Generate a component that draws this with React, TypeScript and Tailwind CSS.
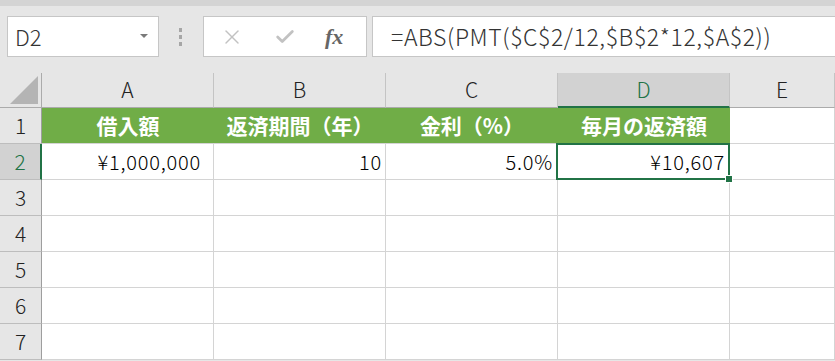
import { X, Check } from "lucide-react";

const FONT = '"Noto Sans CJK JP", "Noto Sans", sans-serif';
const COLS = ["A", "B", "C", "D", "E"];
const ROWS = [1, 2, 3, 4, 5, 6, 7];

const HEAD = ["借入額", "返済期間（年）", "金利（%）", "毎月の返済額"];
const VALUES = ["¥1,000,000", "10", "5.0%", "¥10,607"];
const PADS = ["pr-[12px]", "pr-[3px]", "pr-[4px]", "pr-[4px]"];

function Toolbar() {
  return (
    <div className="flex items-center h-[51px] pt-[10px] pl-[7px]">
      {/* Name box */}
      <div className="relative flex items-center h-[41px] w-[152px] bg-white border border-[#c6c6c6] pl-[7px]">
        <span className="text-[22px] text-[#333] font-light">D2</span>
        <span className="absolute right-[10px] top-[17px] w-0 h-0 border-l-[4px] border-r-[4px] border-t-[4px] border-l-transparent border-r-transparent border-t-[#7a7a7a]" />
      </div>

      {/* Divider dots */}
      <div className="flex flex-col gap-[3px] ml-[20px] mr-[21px]">
        <span className="block w-[3px] h-[4px] bg-[#a6a6a6]" />
        <span className="block w-[3px] h-[4px] bg-[#a6a6a6]" />
        <span className="block w-[3px] h-[4px] bg-[#a6a6a6]" />
      </div>

      {/* Cancel / Enter / fx */}
      <div className="flex items-center h-[41px] w-[164px] bg-white border border-[#c6c6c6]">
        <X className="ml-[16px] h-[24px] w-[24px] text-[#c2c2c2]" strokeWidth={1.4} />
        <Check className="ml-[30px] h-[22px] w-[22px] text-[#c2c2c2]" strokeWidth={3} />
        <span
          className="ml-[29px] text-[22px] italic font-bold text-[#666] leading-none"
          style={{ fontFamily: '"Liberation Serif", "DejaVu Serif", serif' }}
        >
          fx
        </span>
      </div>

      {/* Formula input */}
      <div className="flex items-center h-[41px] flex-1 ml-[5px] bg-white border border-[#c6c6c6] border-r-0 pl-[18px]">
        <span className="text-[23px] font-light tracking-[0.6px] text-[#333] whitespace-nowrap">=ABS(PMT($C$2/12,$B$2*12,$A$2))</span>
      </div>
    </div>
  );
}

function Grid() {
  return (
    <div className="grid grid-cols-[42px_172px_172px_172px_172px_1fr] grid-rows-[35px_repeat(7,36px)]">
      {/* corner */}
      <div className="relative bg-[#e6e6e6] border-r border-b border-[#ababab]">
        <svg className="absolute right-[3px] bottom-[3px]" width="28" height="28" viewBox="0 0 28 28">
          <polygon points="28,0 28,28 0,28" fill="#b4b4b4" />
        </svg>
      </div>
      {COLS.map((c) => {
        const sel = c === "D";
        return (
          <div
            key={c}
            className={
              sel
                ? "flex items-center justify-center bg-[#d2d2d2] border-r border-[#c4c4c4] border-b-2 border-b-[#217346] text-[#217346] text-[21px] font-light"
                : "flex items-center justify-center bg-[#e6e6e6] border-r border-b border-[#c4c4c4] border-b-[#ababab] text-[#222] text-[21px] font-light"
            }
          >
            {c}
          </div>
        );
      })}

      {ROWS.map((r) => {
        const selRow = r === 2;
        return [
          <div
            key={`h${r}`}
            className={
              selRow
                ? "flex items-center justify-center bg-[#d2d2d2] border-b border-[#bdbdbd] border-r-2 border-r-[#217346] text-[#217346] text-[21px] font-light"
                : "flex items-center justify-center bg-[#e6e6e6] border-b border-[#bdbdbd] border-r border-r-[#9e9e9e] text-[#222] text-[21px] font-light"
            }
          >
            {r}
          </div>,
          ...COLS.map((c, i) => {
            if (r === 1 && i < 4) {
              return (
                <div
                  key={`${c}${r}`}
                  className="flex items-center justify-center bg-[#70ad47] border-b border-[#d4d4d4] text-white font-bold text-[21px]"
                >
                  {HEAD[i]}
                </div>
              );
            }
            if (r === 2 && i < 4) {
              const sel = c === "D";
              return (
                <div
                  key={`${c}${r}`}
                  className={`relative flex items-center justify-end ${PADS[i]} bg-white border-r border-b border-[#d4d4d4] text-[20px] font-light tracking-[0.8px] text-black`}
                >
                  {VALUES[i]}
                  {sel && (
                    <>
                      <div className="absolute -left-[2px] -top-[1px] -right-[1px] -bottom-[1px] border-2 border-[#217346]" />
                      <div className="absolute -right-[4px] -bottom-[4px] w-[6px] h-[6px] bg-[#217346] border border-white box-content" />
                    </>
                  )}
                </div>
              );
            }
            return <div key={`${c}${r}`} className="bg-white border-r border-b border-[#d4d4d4]" />;
          }),
        ];
      })}
    </div>
  );
}

export default function App() {
  return (
    <div className="w-[835px] h-[361px] overflow-hidden bg-[#e6e6e6]" style={{ fontFamily: FONT }}>
      <div className="h-[6px] bg-[#d4d4d4]" />
      <Toolbar />
      <div className="h-[16px]" />
      <Grid />
    </div>
  );
}
